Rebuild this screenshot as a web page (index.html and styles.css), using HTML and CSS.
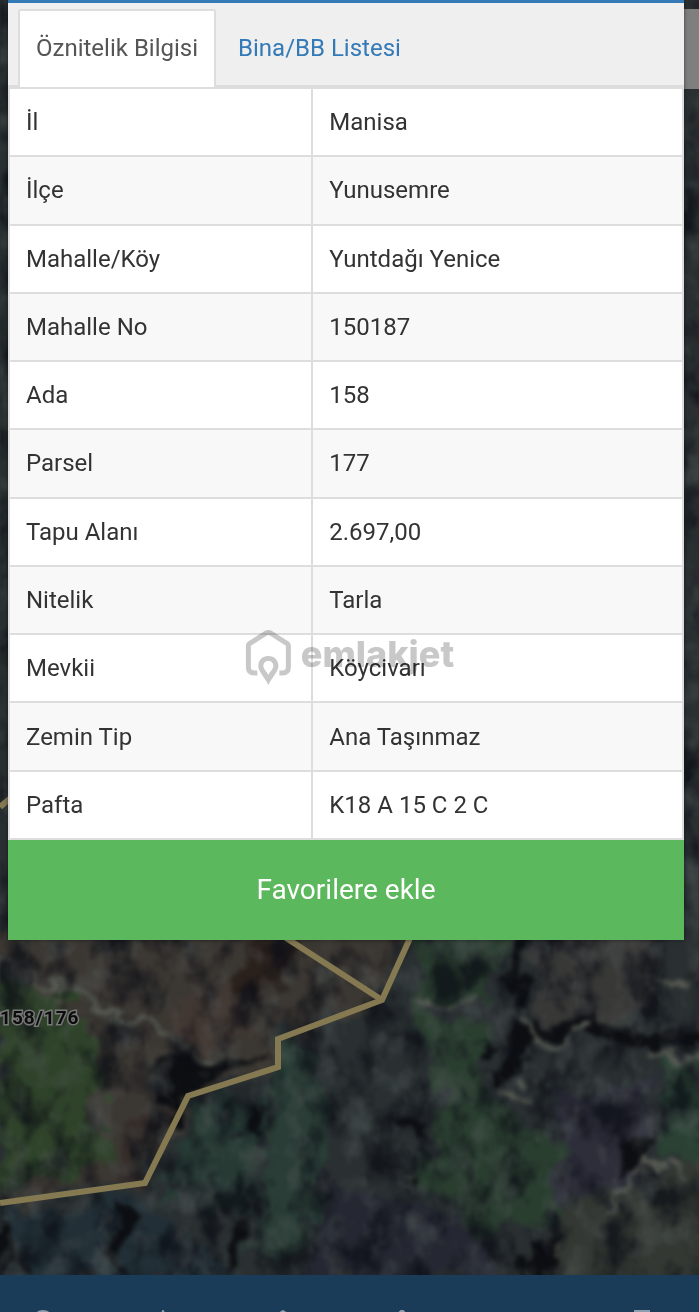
FILE: index.html
```html
<!DOCTYPE html>
<html lang="tr">
  <head>
    <meta charset="UTF-8" />
    <meta name="viewport" content="width=device-width, initial-scale=1.0" />
    <title>Parsel Sorgu</title>
    <link rel="stylesheet" href="styles.css">
  </head>
  <body>
    <svg class="map" viewBox="0 0 699 1312" preserveAspectRatio="xMinYMin slice" aria-hidden="true">
      <defs>
        <filter id="terrain" x="-5%" y="-5%" width="110%" height="110%" color-interpolation-filters="sRGB">
          <feTurbulence type="fractalNoise" baseFrequency="0.03" numOctaves="4" seed="8" result="noise" />
          <feDisplacementMap in="SourceGraphic" in2="noise" scale="50" xChannelSelector="R" yChannelSelector="G" />
          <feGaussianBlur stdDeviation="2" />
        </filter>
        <filter id="shade" x="0" y="0" width="100%" height="100%" color-interpolation-filters="sRGB">
          <feTurbulence type="fractalNoise" baseFrequency="0.03 0.022" numOctaves="4" seed="21" />
          <feColorMatrix values="0 0 0 0 0.04  0 0 0 0 0.05  0 0 0 0 0.08  3.4 0 0 0 -1.5" />
          <feGaussianBlur stdDeviation="1" />
        </filter>
        <filter id="light" x="0" y="0" width="100%" height="100%" color-interpolation-filters="sRGB">
          <feTurbulence type="fractalNoise" baseFrequency="0.035 0.028" numOctaves="4" seed="5" />
          <feColorMatrix values="0 0 0 0 0.36  0 0 0 0 0.39  0 0 0 0 0.38  0 2.6 0 0 -1.25" />
          <feGaussianBlur stdDeviation="1" />
        </filter>
      </defs>
      <rect width="699" height="1312" fill="#2a3032" />
      <g filter="url(#terrain)">
        <path d="M0 930H410L380 1000 280 1040V1068L188 1095 146 1182 0 1203Z" fill="#3b3732" />
        <path d="M0 970L60 990 95 1040 100 1160 60 1185 0 1190Z" fill="#2f432a" />
        <path d="M420 930H510L490 1000 410 1010Z" fill="#283b2e" />
        <path d="M530 930H650V1010L600 1030 540 1020Z" fill="#383837" />
        <path d="M410 1010L480 1030 490 1100 560 1140 560 1220 480 1230 420 1180 440 1100Z" fill="#2a3e30" />
        <path d="M660 1055H699V1180L665 1150Z" fill="#2a4134" />
        <path d="M190 1105L270 1090 250 1210 160 1200Z" fill="#273a34" />
        <path d="M280 1040L320 1060 320 1250 250 1260 270 1150Z" fill="#2a3d36" />
        <path d="M0 1210L140 1195 240 1280 0 1280Z" fill="#222f36" />
        <path d="M320 1180L480 1230 500 1280H310Z" fill="#252832" />
        <path d="M560 1090L650 1080 640 1180 560 1200Z" fill="#2d2e3a" />
        <path d="M560 1210L699 1160V1280H540Z" fill="#333833" />
        <path d="M180 990L240 985 240 1040 180 1060Z" fill="#423833" />
        <path d="M240 940L300 940 275 1000 240 990Z" fill="#2a211d" />
        <path d="M120 1120L165 1115 145 1180 115 1180Z" fill="#352d2a" />
        <g fill="#0d0f12">
          <path d="M510 930H530L520 1000 535 1022 699 1032V1048L540 1033 510 1090 498 1080 515 1020Z" />
          <path d="M160 1060L190 1063 270 1052 185 1092 165 1130Z" />
          <path d="M240 1095L260 1100 255 1150 238 1140Z" />
          <path d="M115 1210L135 1215 120 1270 108 1245Z" />
          <path d="M235 1225L252 1220 240 1270 225 1275Z" />
          <path d="M400 1120L425 1130 420 1150Z" />
          <path d="M470 1045L495 1050 490 1060Z" />
          <path d="M640 1130L655 1130 655 1170 610 1175Z" />
          <path d="M540 1240L560 1235 545 1280H525Z" />
          <path d="M415 1180L430 1175 420 1190Z" />
          <path d="M0 1220L15 1230 30 1275H0Z" />
        </g>
        <g fill="none" stroke="#565a52" stroke-width="6">
          <path d="M0 950Q25 960 50 980T110 1015T170 1035L205 1060" />
          <path d="M415 1010L450 1005 480 1000" />
          <path d="M525 1010L540 1045 590 1035" />
          <path d="M500 1092L530 1098" />
          <path d="M610 1195L655 1155 685 1180" />
          <path d="M650 1050L699 1054" />
          <path d="M655 985L699 990" />
        </g>
      </g>
      <rect width="699" height="1312" filter="url(#shade)" opacity="0.7" />
      <rect width="699" height="1312" filter="url(#light)" opacity="0.45" />
      <g fill="none" stroke="#857952" stroke-width="6">
        <path d="M0 1203L145 1183 188 1096 278 1067V1039L382 1000 411 936" />
        <path d="M280 934L382 1000" />
        <path d="M0 807L12 797" />
      </g>
      <text class="parcel-label" x="0" y="1024">158/176</text>
    </svg>
    <div class="map-control"></div>

    <main class="panel">
      <nav class="tabs">
        <a class="tab active" href="#oznitelik">Öznitelik Bilgisi</a>
        <a class="tab" href="#bina">Bina/BB Listesi</a>
      </nav>
      <div class="details" id="oznitelik">
        <table>
          <tbody>
            <tr><th scope="row">İl</th><td>Manisa</td></tr>
            <tr><th scope="row">İlçe</th><td>Yunusemre</td></tr>
            <tr><th scope="row">Mahalle/Köy</th><td>Yuntdağı Yenice</td></tr>
            <tr><th scope="row">Mahalle No</th><td>150187</td></tr>
            <tr><th scope="row">Ada</th><td>158</td></tr>
            <tr><th scope="row">Parsel</th><td>177</td></tr>
            <tr><th scope="row">Tapu Alanı</th><td>2.697,00</td></tr>
            <tr><th scope="row">Nitelik</th><td>Tarla</td></tr>
            <tr><th scope="row">Mevkii</th><td>Köycivarı</td></tr>
            <tr><th scope="row">Zemin Tip</th><td>Ana Taşınmaz</td></tr>
            <tr><th scope="row">Pafta</th><td>K18 A 15 C 2 C</td></tr>
          </tbody>
        </table>
      </div>
      <button class="favorite" type="button">Favorilere ekle</button>
    </main>

    <div class="watermark">
      <svg width="46" height="56" viewBox="0 0 46 56" aria-hidden="true">
        <path d="M12 44H9Q3 44 3 38V17Q3 15 5 14L21 4Q23 3 25 4L41 14Q43 15 43 17V38Q43 44 37 44H34" fill="none" stroke="currentColor" stroke-width="5" />
        <path fill="currentColor" fill-rule="evenodd" d="M23 27C17 27 13 31 13 37C13 43 18 46 23 56C28 46 33 43 33 37C33 31 29 27 23 27ZM23 32C26 32 28 34 28 37C28 40 25 42 23 46C21 42 18 40 18 37C18 34 20 32 23 32Z" />
      </svg>
      <span>emlakjet</span>
    </div>

    <footer class="toolbar">
      <a href="#ara" aria-label="Ara"><svg viewBox="0 0 28 28"><circle cx="14" cy="11" r="10" /></svg></a>
      <a href="#konum" aria-label="Konum"><svg viewBox="0 0 28 28"><path d="M14 1L24 24 14 19 4 24Z" /></svg></a>
      <a href="#katman" aria-label="Katman"><svg viewBox="0 0 28 28"><path d="M14 1L25 8 14 15 3 8Z" /></svg></a>
      <a href="#olcum" aria-label="Ölçüm"><svg viewBox="0 0 28 28"><path d="M14 0V26M6 8L14 0 22 8" /></svg></a>
      <a href="#bilgi" aria-label="Bilgi"><svg viewBox="0 0 28 28"><path d="M4 8H24V24H4Z" /></svg></a>
      <a href="#menu" aria-label="Menü"><svg viewBox="0 0 28 28"><path d="M7 1H21V26H7Z" /></svg></a>
    </footer>
  </body>
</html>
```
FILE: styles.css
```css
* {
  box-sizing: border-box;
}

body {
  display: flex;
  flex-direction: column;
  position: relative;
  min-height: 100vh;
  margin: 0;
  overflow: hidden;
  background-color: #23292b;
  color: #333;
  font-family: Roboto, Arial, sans-serif;
  font-size: 24px;
  line-height: 34px;
}

.map {
  position: absolute;
  top: 0;
  left: 0;
  width: 100%;
  height: 100%;
}

.parcel-label {
  fill: #0c0c0c;
  stroke: #777;
  stroke-width: 3px;
  paint-order: stroke;
  font-size: 19px;
  font-weight: 700;
  letter-spacing: 1px;
}

.map-control {
  position: absolute;
  top: 9px;
  right: 0;
  width: 60px;
  height: 80px;
  background-color: #7f7f7f;
}

.panel {
  position: relative;
  margin: 0 15px 0 8px;
  border-top: 3px solid #337ab7;
  background-color: #fff;
  box-shadow: 0 0 4px rgba(0, 0, 0, 0.5);
}

.tabs {
  display: flex;
  gap: 4px;
  padding: 6px 10px 0;
  background-color: #efefef;
  border-bottom: 2px solid #ddd;
}

.tab {
  margin-bottom: -2px;
  padding: 20px 16px 22px;
  border: 2px solid transparent;
  border-bottom: none;
  border-radius: 3px 3px 0 0;
  color: #337ab7;
  text-decoration: none;
}

.tab.active {
  background-color: #fff;
  border-color: #ddd;
  color: #555;
}

table {
  width: 100%;
  height: 753px;
  border-collapse: collapse;
}

th,
td {
  padding: 16px;
  border: 2px solid #ddd;
  text-align: left;
  font-weight: 400;
}

th {
  width: 45%;
}

tr:nth-child(even) {
  background-color: #f8f8f8;
}

.favorite {
  display: block;
  width: 100%;
  padding: 33px 16px;
  border: none;
  background-color: #5cb85c;
  color: #fff;
  font-family: inherit;
  font-size: 28px;
  line-height: 34px;
  cursor: pointer;
}

.watermark {
  display: flex;
  align-items: flex-start;
  gap: 10px;
  position: absolute;
  top: 629px;
  left: 50%;
  transform: translateX(-50%);
  color: #c8c8c8;
  mix-blend-mode: multiply;
  font-family: Inter, sans-serif;
  font-size: 36px;
  font-weight: 800;
  line-height: 50px;
}

.toolbar {
  display: flex;
  justify-content: space-between;
  position: relative;
  height: 37px;
  margin-top: auto;
  padding: 35px 43px 0 29px;
  overflow: hidden;
  background-color: #1b3c59;
}

.toolbar svg {
  display: block;
  width: 28px;
  height: 28px;
  fill: none;
  stroke: #8d9dab;
  stroke-width: 2;
}
```
